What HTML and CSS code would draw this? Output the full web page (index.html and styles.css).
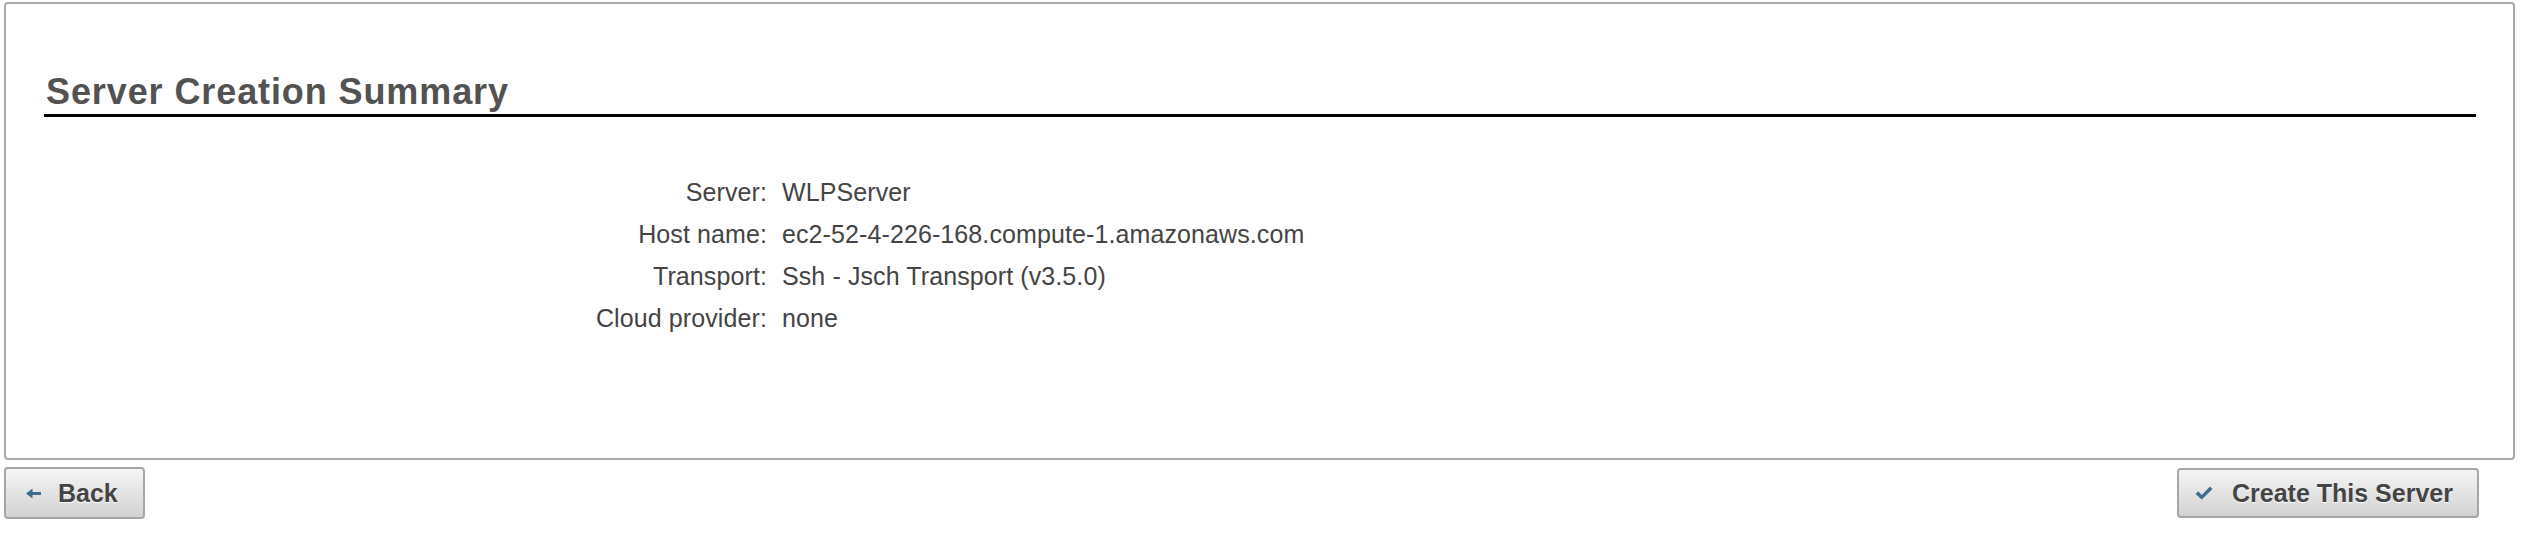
FILE: index.html
```html
<!DOCTYPE html>
<html>
<head>
<meta charset="utf-8">
<link rel="stylesheet" href="styles.css">
</head>
<body>
<div class="page">
  <section class="panel">
    <h1 class="title">Server Creation Summary</h1>
    <dl class="summary">
      <dt>Server:</dt><dd>WLPServer</dd>
      <dt>Host name:</dt><dd>ec2-52-4-226-168.compute-1.amazonaws.com</dd>
      <dt>Transport:</dt><dd>Ssh - Jsch Transport (v3.5.0)</dd>
      <dt>Cloud provider:</dt><dd>none</dd>
    </dl>
  </section>
  <div class="actions">
    <button class="btn btn-back">
      <svg class="ico" width="16" height="11" viewBox="0 0 16 11"><path d="M0 5.5 L6.5 0.5 L6.5 4 L15 4 L15 7 L6.5 7 L6.5 10.5 Z" fill="#3d6d8c"/></svg>
      <span>Back</span>
    </button>
    <button class="btn btn-create">
      <svg class="ico" width="18" height="14" viewBox="0 0 18 14"><path d="M0.5 8 L3.2 5.3 L6.8 8.9 L15 0.5 L17.5 3 L6.8 13.5 Z" fill="#3d6d8c"/></svg>
      <span>Create This Server</span>
    </button>
  </div>
</div>
</body>
</html>
```
FILE: styles.css
```css
html, body {
  margin: 0;
  padding: 0;
  background: #fff;
}
.page {
  padding: 2px 15px 0 4px;
  font-family: "Liberation Sans", Arial, Helvetica, sans-serif;
}
.panel {
  box-sizing: border-box;
  height: 458px;
  border: 2px solid #a9a9a9;
  border-radius: 4px;
  padding: 0 37px 0 38px;
}
.title {
  margin: 68px 0 0 0;
  padding: 0 0 2px 2px;
  font-size: 36px;
  letter-spacing: 0.9px;
  line-height: 40px;
  font-weight: bold;
  color: #525252;
  border-bottom: 3px solid #000;
}
.summary {
  display: grid;
  grid-template-columns: 723px 1fr;
  column-gap: 15px;
  margin: 54px 0 0 0;
  font-size: 25px;
  letter-spacing: 0.1px;
  line-height: 42px;
  color: #444;
}
.summary dt {
  text-align: right;
  margin: 0;
}
.summary dd {
  margin: 0;
}
.actions {
  display: flex;
  justify-content: space-between;
  padding: 7px 36px 0 0;
}
.btn {
  display: flex;
  align-items: center;
  height: 52px;
  box-sizing: border-box;
  border: 2px solid #a6a6a6;
  border-radius: 4px;
  background: linear-gradient(#f5f5f5, #d2d2d2);
  font-family: "Liberation Sans", Arial, Helvetica, sans-serif;
  font-weight: bold;
  font-size: 25px;
  color: #444;
  text-shadow: 0 1px 1px #fff;
  white-space: nowrap;
  cursor: pointer;
}
.btn-back {
  width: 141px;
  padding: 0 0 0 20px;
  gap: 16px;
}
.btn-create {
  width: 302px;
  height: 50px;
  margin-top: 1px;
  padding: 0 0 0 16px;
  gap: 19px;
}
.ico {
  flex: none;
}
```
